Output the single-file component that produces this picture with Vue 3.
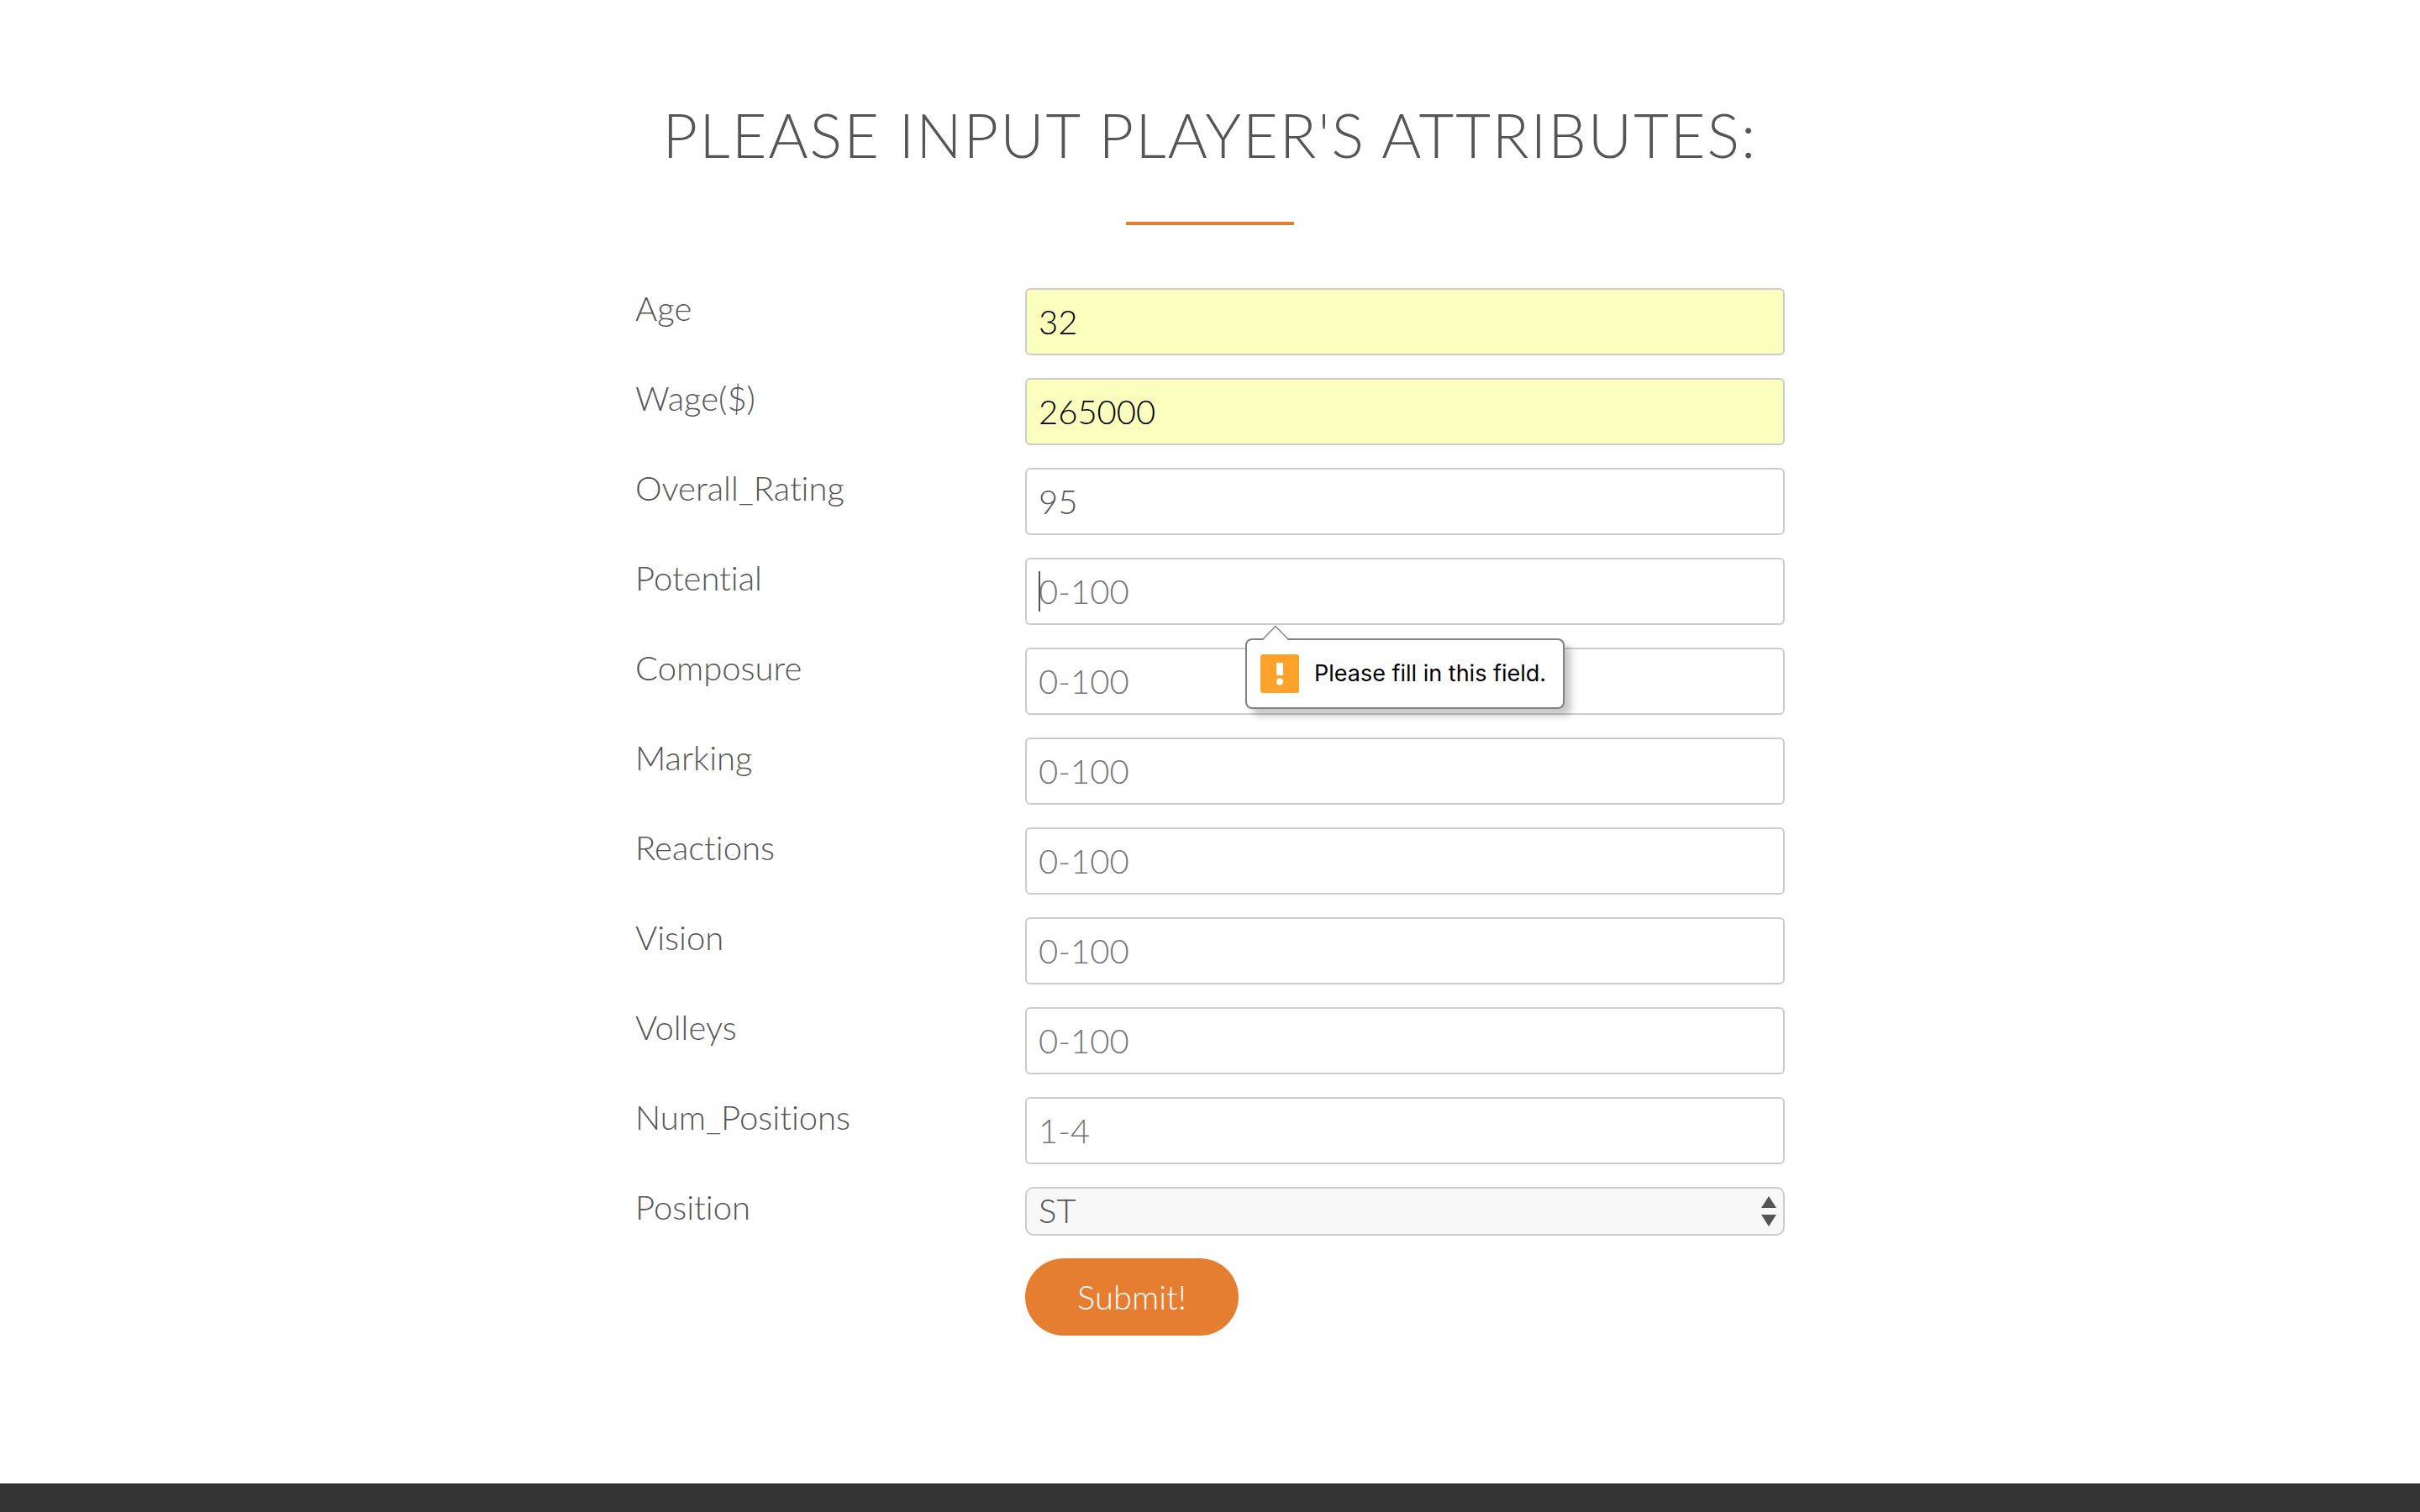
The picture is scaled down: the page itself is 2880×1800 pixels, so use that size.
<script setup>
import { ref } from 'vue'

const fields = ref([
  { id: 'age', label: 'Age', value: '32', hint: '', autofilled: true },
  { id: 'wage', label: 'Wage($)', value: '265000', hint: '', autofilled: true },
  { id: 'overall', label: 'Overall_Rating', value: '95', hint: '0-100' },
  { id: 'potential', label: 'Potential', value: '', hint: '0-100', invalid: true },
  { id: 'composure', label: 'Composure', value: '', hint: '0-100' },
  { id: 'marking', label: 'Marking', value: '', hint: '0-100' },
  { id: 'reactions', label: 'Reactions', value: '', hint: '0-100' },
  { id: 'vision', label: 'Vision', value: '', hint: '0-100' },
  { id: 'volleys', label: 'Volleys', value: '', hint: '0-100' },
  { id: 'num-positions', label: 'Num_Positions', value: '', hint: '1-4' }
])
const position = ref('ST')
</script>

<template>
  <div class="page">
    <main class="section">
      <h2 class="title">Please input player's attributes:</h2>
      <form class="form" novalidate @submit.prevent>
        <div v-for="field in fields" :key="field.id" class="row">
          <label :for="field.id">{{ field.label }}</label>
          <div class="control">
            <input
              :id="field.id"
              v-model="field.value"
              type="text"
              :class="{ autofilled: field.autofilled }"
              :placeholder="field.hint"
              required
            />
            <template v-if="field.invalid">
              <span class="caret"></span>
              <div class="bubble" role="alert">
                <svg class="bubble-arrow" width="34" height="20" viewBox="0 0 34 20" aria-hidden="true">
                  <path d="M1 19 L17 2 L33 19 V20 H1 Z" fill="#fff" />
                  <path d="M1 18 L17 1.500 L33 18" fill="none" stroke="#808080" stroke-width="1.300" />
                </svg>
                <svg class="bubble-icon" width="46" height="46" viewBox="0 0 46 46" aria-hidden="true">
                  <rect width="46" height="46" rx="3" fill="#fca129" />
                  <rect x="19" y="10" width="8" height="15" fill="#fff" />
                  <circle cx="23" cy="32.500" r="4" fill="#fff" />
                </svg>
                <span>Please fill in this field.</span>
              </div>
            </template>
          </div>
        </div>
        <div class="row">
          <label for="position">Position</label>
          <div class="control">
            <select id="position" v-model="position">
              <option>ST</option>
              <option>CM</option>
              <option>CB</option>
              <option>GK</option>
            </select>
            <svg class="select-arrows" width="18" height="36" viewBox="0 0 18 36" aria-hidden="true">
              <path d="M9 0 L18 14 H0 Z M0 22 H18 L9 36 Z" fill="#555" />
            </svg>
          </div>
        </div>
        <div class="row">
          <span></span>
          <div class="control"><button type="submit">Submit!</button></div>
        </div>
      </form>
    </main>
    <footer class="footer"></footer>
  </div>
</template>

<style>
body {
  margin: 0;
  background: #fff;
}
</style>

<style scoped>
*,
*::before,
*::after {
  box-sizing: border-box;
}
.page {
  display: flex;
  flex-direction: column;
  min-height: 100vh;
  color: #555;
  font-family: Lato, "Open Sans", sans-serif;
  font-size: 40px;
  font-weight: 300;
  font-variant-ligatures: none;
  line-height: 48px;
}
.section {
  padding: 116px 0 176px;
}
.title {
  margin: 0;
  font-size: 72px;
  font-weight: 300;
  line-height: 88px;
  letter-spacing: 2px;
  text-align: center;
  text-transform: uppercase;
}
.title::after {
  content: "";
  display: block;
  width: 200px;
  height: 4px;
  margin: 60px auto 0;
  background: #e67e32;
}
.form {
  display: flex;
  flex-direction: column;
  gap: 27px;
  width: 47.5%;
  min-width: 1100px;
  margin: 75px auto 0;
}
.row {
  display: grid;
  grid-template-columns: 464px 1fr;
  align-items: start;
}
.control {
  position: relative;
  display: flex;
}
input,
select,
button {
  margin: 0;
  color: inherit;
  font: inherit;
}
input {
  width: 100%;
  height: 80px;
  padding: 14px;
  border: 2px solid #ccc;
  border-radius: 6px;
  background: #fff;
  outline: none;
}
input::placeholder {
  color: #757575;
  opacity: 1;
}
input.autofilled {
  background: #faffbd;
  color: #000;
}
.caret {
  position: absolute;
  top: 16px;
  left: 16px;
  width: 2px;
  height: 48px;
  background: #555;
}
.bubble {
  position: absolute;
  z-index: 1;
  top: 96px;
  left: 262px;
  display: flex;
  align-items: center;
  gap: 18px;
  height: 84px;
  padding: 0 20px 0 16px;
  border: 2px solid #808080;
  border-radius: 8px;
  background: #fff;
  box-shadow: 8px 8px 8px rgba(0, 0, 0, 0.22);
  color: #000;
  font-family: Inter, Roboto, sans-serif;
  font-size: 27px;
  font-weight: 400;
  white-space: nowrap;
}
.bubble-arrow {
  position: absolute;
  top: -18px;
  left: 17px;
}
select {
  width: 100%;
  height: 58px;
  padding: 2px 14px 4px;
  border: 2px solid #ccc;
  border-radius: 10px;
  background: #f8f8f8;
  line-height: 48px;
  appearance: none;
  outline: none;
}
.select-arrows {
  position: absolute;
  top: 11px;
  right: 10px;
  pointer-events: none;
}
button {
  height: 92px;
  padding: 0 62px;
  border: 0;
  border-radius: 46px;
  background: #e67e32;
  color: #fff;
}
.footer {
  flex: 1;
  min-height: 34px;
  background: #333;
}
</style>
